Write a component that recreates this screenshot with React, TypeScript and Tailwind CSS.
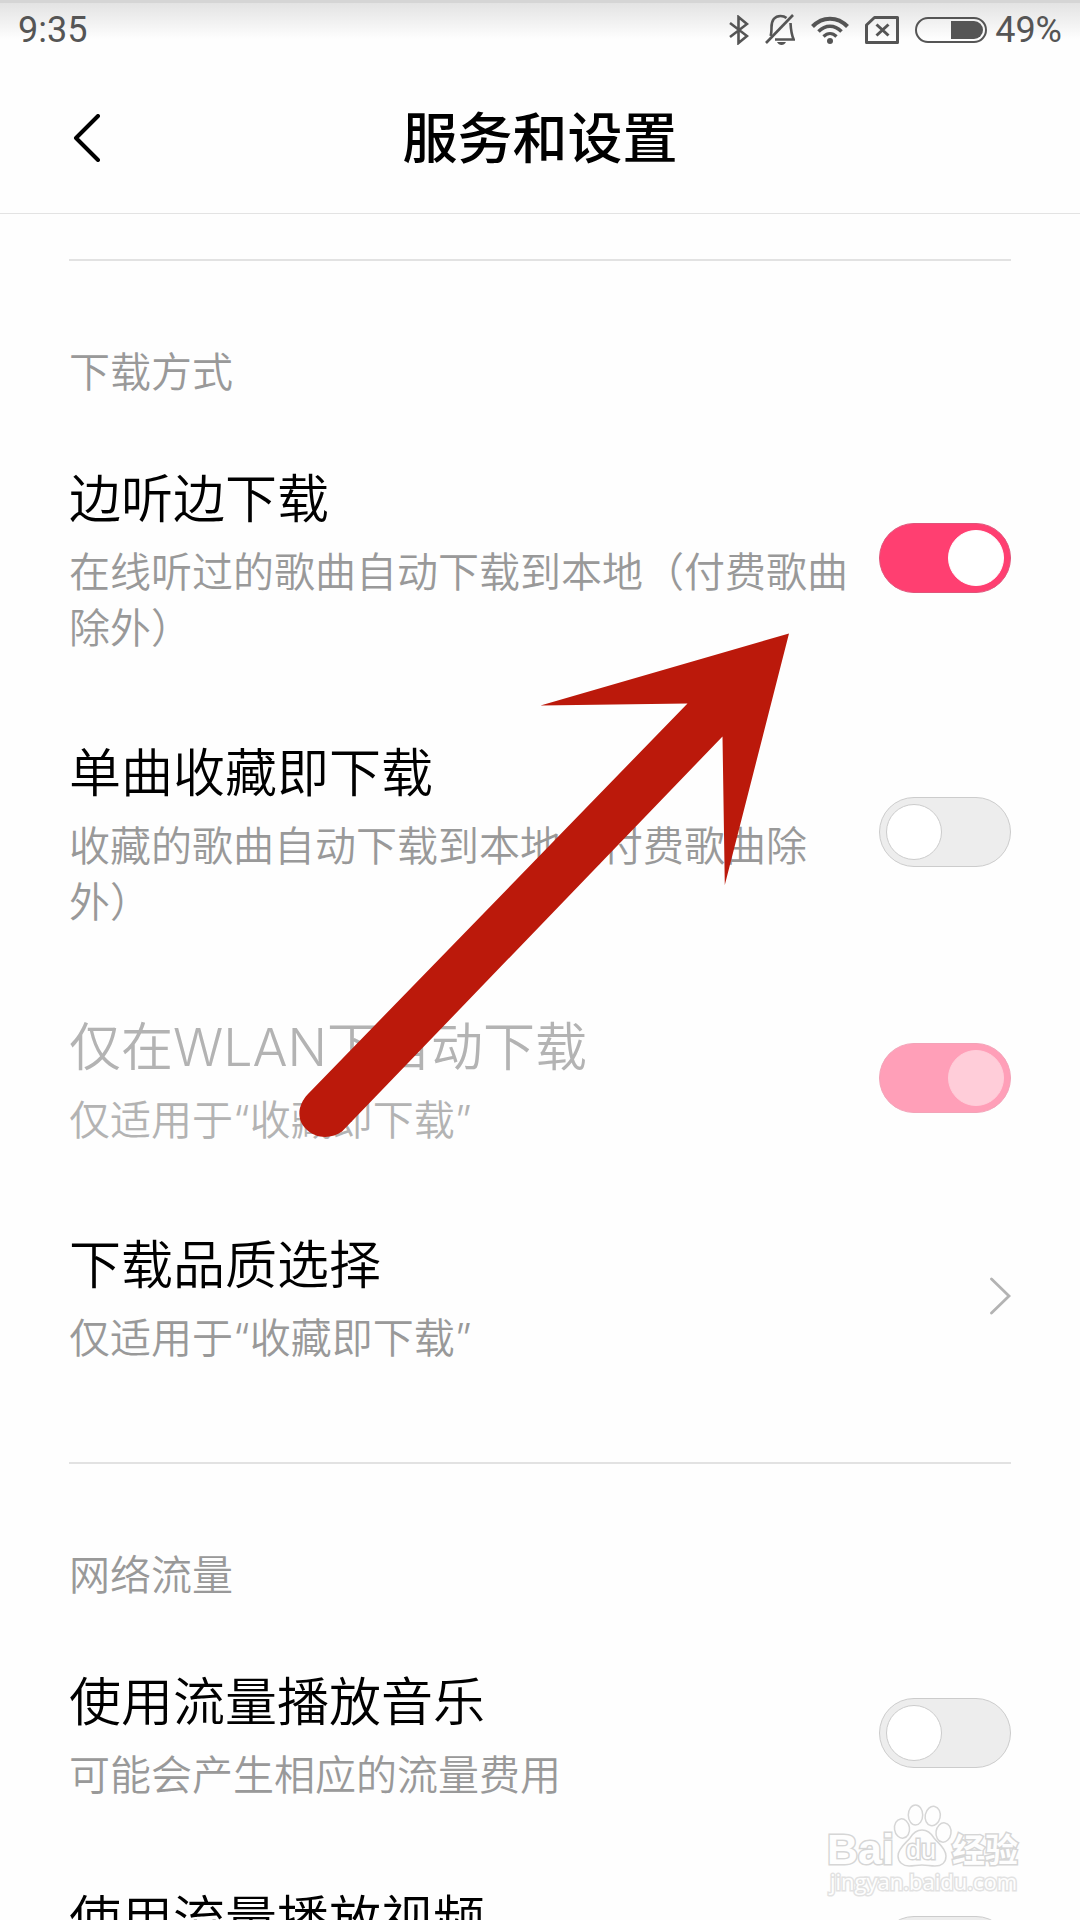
import React, { useId, useState } from 'react';

type SettingProps = {
  title: string;
  note: string;
  on?: boolean;
  disabled?: boolean;
};

const StatusBar: React.FC = () => (
  <div className="flex h-[60px] shrink-0 items-center justify-between border-t-[3px] border-[#d5d5d5] bg-linear-to-b from-[#e3e3e3] to-[#fefefe] to-[36px] px-[18px] pb-1 text-[36px] leading-none font-normal text-[#555555] font-['Roboto',sans-serif]">
    <span>9:35</span>
    <div className="flex items-center gap-4">
      <svg width="20" height="30" viewBox="0 0 20 30" fill="none" stroke="currentColor" strokeWidth="2.6" aria-label="蓝牙">
        <path d="M1 8l17 13-8.500 7V2l8.500 7L1 22" />
      </svg>
      <svg width="30" height="31" viewBox="0 0 30 31" fill="none" stroke="currentColor" strokeWidth="2.6" aria-label="静音">
        <path d="M1 29L28 1" />
        <path d="M5.500 22c.8-2 1-4 1-8.500C6.500 6 10 2 15.500 2c2.500 0 4.500.7 6 2" />
        <path d="M25.500 9c.4 8 .7 11 3.200 16.500H10" />
        <path d="M12 28h9c-1 2-2.500 3-4.500 3s-3.500-1-4.500-3z" fill="currentColor" stroke="none" />
      </svg>
      <svg width="38" height="28" viewBox="0 0 38 28" fill="none" stroke="currentColor" strokeWidth="4" aria-label="无线网络">
        <path d="M1.500 10.500C11.500 0 26.500 0 36.500 10.500" />
        <path d="M7.500 15.500c7-7 16-7 23 0" strokeWidth="3.600" />
        <path d="M12.500 20.500c4-4 9-4 13 0" strokeWidth="3.200" />
        <circle cx="19" cy="25" r="3" fill="currentColor" stroke="none" />
      </svg>
      <svg width="34" height="28" viewBox="0 0 34 28" fill="none" stroke="currentColor" strokeWidth="3" aria-label="无 SIM 卡">
        <path d="M9.500 1.500H32.500V26.500H1.500V9z" strokeLinejoin="round" />
        <path d="M11.500 8.500l12 11M23.500 8.500l-12 11" />
      </svg>
      <div className="flex items-center gap-2">
        <svg width="72" height="26" viewBox="0 0 72 26" aria-label="电池">
          <rect x="1" y="1" width="70" height="24" rx="12" fill="none" stroke="currentColor" strokeWidth="2" />
          <path d="M36 4h23a9 9 0 0 1 0 18H36z" fill="currentColor" />
        </svg>
        <span>49%</span>
      </div>
    </div>
  </div>
);

const Section: React.FC<{ title: string; children: React.ReactNode }> = ({ title, children }) => (
  <section className="mx-[69px] border-t-2 border-[#e2e2e2] pt-[81px] pb-[57px]">
    <h2 className="mb-[19px] text-[41px] leading-[60px] text-[#999999]">{title}</h2>
    {children}
  </section>
);

const SettingText: React.FC<SettingProps> = ({ title, note, disabled }) => (
  <span className={disabled ? 'flex-1 text-[#b3b3b3]' : 'flex-1 text-[#999999]'}>
    <span className={disabled ? 'block text-[52px] leading-[80px]' : 'block text-[52px] leading-[80px] text-black'}>
      {title}
    </span>
    <span className="mt-1 block text-[41px] leading-[56px]">{note}</span>
  </span>
);

const SwitchRow: React.FC<SettingProps> = ({ title, note, on = false, disabled = false }) => {
  const [checked, setChecked] = useState(on);
  const id = useId();

  return (
    <label htmlFor={id} className="flex items-center gap-6 py-[39px]">
      <SettingText title={title} note={note} disabled={disabled} />
      <input
        id={id}
        type="checkbox"
        role="switch"
        checked={checked}
        disabled={disabled}
        onChange={(e) => setChecked(e.target.checked)}
        className="h-[70px] w-[132px] shrink-0 appearance-none rounded-full border border-[#cccccc] bg-[#ededed] p-[6px] before:block before:size-14 before:rounded-full before:border before:border-[#cccccc] before:bg-white before:transition-transform checked:border-[#e0547a] checked:bg-[#ff3f71] checked:before:translate-x-[62px] checked:before:border-white disabled:checked:border-[#f3a3b8] disabled:checked:bg-[#ff9fb8] disabled:checked:before:border-[#ffcdd9] disabled:checked:before:bg-[#ffcdd9]"
      />
    </label>
  );
};

const LinkRow: React.FC<SettingProps> = ({ title, note }) => (
  <a href="#quality" className="flex items-center gap-6 py-[39px]">
    <SettingText title={title} note={note} />
    <svg width="22" height="38" viewBox="0 0 22 38" fill="none" stroke="#b3b3b3" strokeWidth="2.800" strokeLinecap="round">
      <path d="M2.500 2L20 19 2.500 36" />
    </svg>
  </a>
);

const Pointer: React.FC = () => (
  <svg className="pointer-events-none absolute top-[633px] left-[299px]" width="491" height="504" viewBox="299 633 491 504" aria-hidden="true">
    <path
      d="M789 633.500L540.500 705.500 687.500 703.500 308 1094C296.500 1106 297 1121 306.500 1129.500C316 1139 332 1139 342 1131.500L722.500 736.500 724.800 885z"
      fill="#bb190b"
    />
  </svg>
);

const Watermark: React.FC = () => (
  <svg
    className="pointer-events-none absolute right-[56px] bottom-[20px]"
    width="200"
    height="100"
    viewBox="824 1800 200 100"
    fill="#fefefe"
    stroke="#d6d6d6"
    strokeWidth="1.500"
  >
    <ellipse cx="902" cy="1828.500" rx="7.500" ry="9.700" transform="rotate(-8 902 1828.500)" />
    <ellipse cx="915.500" cy="1815" rx="7.200" ry="10" />
    <ellipse cx="932.700" cy="1816" rx="7.500" ry="9.700" transform="rotate(12 932.700 1816)" />
    <ellipse cx="943.500" cy="1832.500" rx="7.500" ry="9.700" transform="rotate(8 943.500 1832.500)" />
    <path d="M922 1830c6 0 9 3 12 8 3 4 12 10 12 18 0 7-5 10-11 10-5 0-8-1-13-1s-8 1-13 1c-6 0-11-4-11-10 0-8 9-14 12-18 3-5 6-8 12-8z" />
    <g fontFamily="'Liberation Sans', 'Noto Sans CJK SC', sans-serif" fontWeight="bold" paintOrder="stroke" strokeWidth="3">
      <text x="827" y="1864" fontSize="43">Bai</text>
      <text x="906" y="1859" fontSize="27" fontWeight="normal">du</text>
      <text x="952" y="1862" fontSize="33">经验</text>
    </g>
    <text x="830" y="1890" fontSize="22" fontWeight="normal" strokeWidth="3" paintOrder="stroke" stroke="#e2e2e2" fontFamily="'Open Sans', sans-serif">
      jingyan.baidu.com
    </text>
  </svg>
);

const App: React.FC = () => {
  return (
    <div
      lang="zh-CN"
      className="relative flex h-screen flex-col overflow-hidden bg-[#fefefe] font-[350] text-black font-['Inter','Noto_Sans_CJK_SC',sans-serif]"
    >
      <StatusBar />
      <header className="flex h-[154px] shrink-0 items-center justify-between border-b border-[#e3e3e3] px-[69px] pt-[2px]">
        <button type="button" aria-label="返回" className="w-9">
          <svg width="36" height="48" viewBox="0 0 36 48" fill="none" stroke="black" strokeWidth="4" strokeLinecap="round" strokeLinejoin="round">
            <path d="M29 2L7 24l22 22" />
          </svg>
        </button>
        <h1 className="text-[55px] leading-[80px] font-medium">服务和设置</h1>
        <span className="w-9" />
      </header>

      <main className="pt-[45px]">
        <Section title="下载方式">
          <SwitchRow title="边听边下载" note="在线听过的歌曲自动下载到本地（付费歌曲除外）" on />
          <SwitchRow title="单曲收藏即下载" note="收藏的歌曲自动下载到本地（付费歌曲除外）" />
          <SwitchRow title="仅在WLAN下自动下载" note="仅适用于“收藏即下载”" on disabled />
          <LinkRow title="下载品质选择" note="仅适用于“收藏即下载”" />
        </Section>
        <Section title="网络流量">
          <SwitchRow title="使用流量播放音乐" note="可能会产生相应的流量费用" />
          <SwitchRow title="使用流量播放视频" note="可能会产生相应的流量费用" />
        </Section>
      </main>

      <Pointer />
      <Watermark />
    </div>
  );
};

export default App;
